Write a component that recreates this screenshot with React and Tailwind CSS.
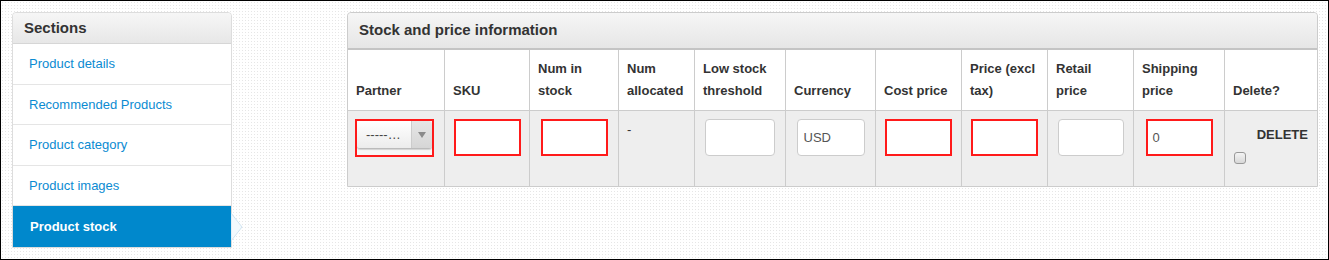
import React from "react";

const font = { fontFamily: '"Liberation Sans", Arial, sans-serif' };

const cols = [
  { w: "w-[97px]", label: ["Partner"] },
  { w: "w-[85px]", label: ["SKU"] },
  { w: "w-[89px]", label: ["Num in", "stock"] },
  { w: "w-[76px]", label: ["Num", "allocated"] },
  { w: "w-[91px]", label: ["Low stock", "threshold"] },
  { w: "w-[90px]", label: ["Currency"] },
  { w: "w-[86px]", label: ["Cost price"] },
  { w: "w-[86px]", label: ["Price (excl", "tax)"] },
  { w: "w-[86px]", label: ["Retail", "price"] },
  { w: "w-[91px]", label: ["Shipping", "price"] },
  { w: "w-[92px]", label: ["Delete?"] },
];

function RedInput({ value = "" }) {
  return (
    <div className="mx-auto flex h-[37px] w-[67px] items-center border-2 border-[#ff1a1a] bg-white pl-[5px] text-[13px] text-[#555]">
      {value}
    </div>
  );
}

function PlainInput({ value = "", w = "w-[70px]" }) {
  return (
    <div className={`mx-auto flex h-[37px] ${w} items-center rounded-[4px] border border-[#cccccc] bg-white pl-[6px] text-[13px] text-[#555]`}>
      {value}
    </div>
  );
}

function PartnerSelect() {
  return (
    <div className="h-[38px] w-[79px] border-2 border-[#ff1a1a] bg-[#f7f7f7]">
      <div className="flex h-[28px] w-full overflow-hidden rounded-[3px] border-b border-[#bbbbbb] bg-gradient-to-b from-white to-[#ececec] shadow-[0_1px_1px_rgba(0,0,0,0.15)]">
        <div className="flex flex-1 items-center pl-[9px] text-[13px] text-[#444]">-----…</div>
        <div className="flex w-[21px] items-center justify-center border-l border-[#cccccc] bg-gradient-to-b from-[#e6e6e6] to-[#d6d6d6]">
          <svg width="8" height="6" viewBox="0 0 8 6">
            <polygon points="0,0 8,0 4,6" fill="#8a8a8a" />
          </svg>
        </div>
      </div>
    </div>
  );
}

const sections = [
  "Product details",
  "Recommended Products",
  "Product category",
  "Product images",
];

export default function App() {
  return (
    <div
      style={font}
      className="box-border flex h-[260px] w-[1329px] items-start border border-black bg-white bg-[radial-gradient(circle,#e6e6e6_0.8px,transparent_1px)] bg-[length:3px_3px] pl-[11px] pt-[11px]"
    >
      {/* Sidebar */}
      <div className="relative w-[220px] rounded-t-[4px] border border-[#dddddd] bg-white">
        <div className="flex h-[31px] items-center rounded-t-[4px] border-b border-[#d6d6d6] bg-gradient-to-b from-[#f6f6f6] to-[#e7e7e7] pl-[11px] text-[15px] font-bold text-[#333]">
          Sections
        </div>
        {sections.map((s) => (
          <div
            key={s}
            className="flex h-[40.6px] items-center border-b border-[#e5e5e5] pl-[16px] text-[13px] text-[#0b8bd2]"
          >
            {s}
          </div>
        ))}
        <div className="relative flex h-[41px] items-center bg-[#0088cc] pl-[17px] text-[13px] font-bold text-white">
          Product stock
          <svg
            className="absolute left-[218px] top-[7px]"
            width="12"
            height="28"
            viewBox="0 0 12 28"
          >
            <polygon points="0,0 11,14 0,28" fill="#f3f9fd" stroke="#cfe3f1" strokeWidth="1" />
          </svg>
        </div>
      </div>

      {/* Main panel */}
      <div className="ml-[115px] w-[971px] rounded-t-[4px] border border-[#cccccc] bg-white">
        <div className="flex h-[37px] items-center rounded-t-[4px] border-b-2 border-[#c4c4c4] bg-gradient-to-b from-[#f6f6f6] to-[#e6e6e6] pl-[11px] text-[15px] font-bold text-[#333]">
          Stock and price information
        </div>
        {/* header row */}
        <div className="flex h-[61px] border-b border-[#cccccc] bg-white">
          {cols.map((c, i) => (
            <div
              key={i}
              className={`${c.w} flex flex-col justify-end px-[8px] pb-[8px] text-[13px] font-bold leading-[22px] text-[#333] ${i < cols.length - 1 ? "border-r border-[#cccccc]" : ""}`}
            >
              {c.label.map((l) => (
                <div key={l} className="whitespace-nowrap">{l}</div>
              ))}
            </div>
          ))}
        </div>
        {/* body row */}
        <div className="flex h-[75px] bg-[#eeeeee]">
          <div className="w-[97px] border-r border-[#cccccc] pl-[7px] pt-[8px]">
            <PartnerSelect />
          </div>
          <div className="w-[85px] border-r border-[#cccccc] pt-[8px]">
            <RedInput />
          </div>
          <div className="w-[89px] border-r border-[#cccccc] pt-[8px]">
            <RedInput />
          </div>
          <div className="w-[76px] border-r border-[#cccccc] pl-[8px] pt-[8px] text-[13px] leading-[22px] text-[#333]">
            -
          </div>
          <div className="w-[91px] border-r border-[#cccccc] pt-[8px]">
            <PlainInput w="w-[70px]" />
          </div>
          <div className="w-[90px] border-r border-[#cccccc] pt-[8px]">
            <PlainInput w="w-[68px]" value="USD" />
          </div>
          <div className="w-[86px] border-r border-[#cccccc] pt-[8px]">
            <RedInput />
          </div>
          <div className="w-[86px] border-r border-[#cccccc] pt-[8px]">
            <RedInput />
          </div>
          <div className="w-[86px] border-r border-[#cccccc] pt-[8px]">
            <PlainInput w="w-[66px]" />
          </div>
          <div className="w-[91px] border-r border-[#cccccc] pt-[8px]">
            <RedInput value="0" />
          </div>
          <div className="w-[92px] px-[9px] pt-[8px]">
            <div className="pt-[7px] text-right text-[13px] font-bold leading-[18px] text-[#333]">
              DELETE
            </div>
            <div className="mt-[8px] h-[12px] w-[12px] rounded-[3px] border border-[#999] bg-gradient-to-b from-[#f4f4f4] to-[#d8d8d8]" />
          </div>
        </div>
      </div>
    </div>
  );
}
